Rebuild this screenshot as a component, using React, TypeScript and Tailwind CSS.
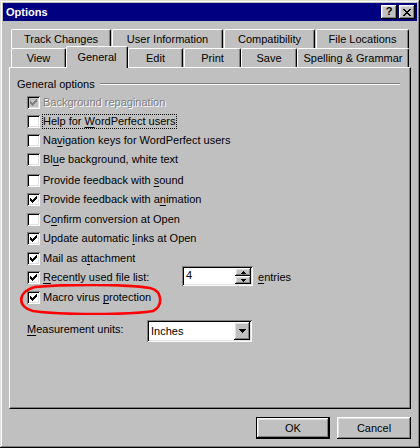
import React from 'react';

const raised = 'shadow-[inset_-1px_-1px_#000,inset_1px_1px_#fff,inset_-2px_-2px_#808080,inset_2px_2px_#dfdfdf]';
const sunken = 'shadow-[inset_1px_1px_#808080,inset_-1px_-1px_#fff,inset_2px_2px_#000,inset_-2px_-2px_#dfdfdf]';

// "&" marks the accelerator letter
const Label = ({ text }: { text: string }) => {
  const i = text.indexOf('&');
  if (i < 0) return <>{text}</>;
  return (
    <>
      {text.slice(0, i)}
      <span className="underline decoration-1 underline-offset-[2px]">{text[i + 1]}</span>
      {text.slice(i + 2)}
    </>
  );
};

const checkCols = [2, 3, 4, 3, 2, 1, 0];

const CheckBox = ({ checked, disabled }: { checked?: boolean; disabled?: boolean }) => (
  <div className={`relative h-[13px] w-[13px] shrink-0 ${disabled ? 'bg-[#c0c0c0]' : 'bg-white'} ${sunken}`}>
    {checked ? (
      <svg className="absolute left-0 top-0" width="13" height="13" viewBox="0 0 13 13" shapeRendering="crispEdges">
        {checkCols.map((start, c) => (
          <rect key={c} x={3 + c} y={3 + start} width="1" height="3" fill={disabled ? '#808080' : '#000'} />
        ))}
      </svg>
    ) : null}
  </div>
);

const Arrow = ({ dir, size }: { dir: 'up' | 'down'; size: number }) => {
  const rows = Array.from({ length: Math.ceil(size / 2) }, (_, r) => r);
  const h = rows.length;
  return (
    <svg width={size} height={h} viewBox={`0 0 ${size} ${h}`} shapeRendering="crispEdges">
      {rows.map((r) => {
        const w = size - r * 2;
        const y = dir === 'down' ? r : h - 1 - r;
        return <rect key={r} x={r} y={y} width={w} height="1" fill="#000" />;
      })}
    </svg>
  );
};

const Tab = ({ label, w, selected }: { label: string; w: string; selected?: boolean }) => (
  <div
    className={`${w} flex shrink-0 justify-center rounded-tl-[2px] rounded-tr-[2px] border-l border-t border-r border-l-white border-t-white border-r-black bg-[#c0c0c0] shadow-[inset_-1px_0_#808080] ${
      selected ? 'relative z-10 -mt-[2px] h-[22px] pt-[4px]' : 'h-[19px] pt-[3px]'
    }`}
  >
    <span className="whitespace-nowrap">{label}</span>
  </div>
);

type Row = { label: string; h: string; checked?: boolean; disabled?: boolean; focus?: boolean; spin?: boolean };

const rows: Row[] = [
  { label: 'Background repagination', h: 'h-[19px]', checked: true, disabled: true },
  { label: 'Help for &WordPerfect users', h: 'h-[19px]', focus: true },
  { label: 'Na&vigation keys for WordPerfect users', h: 'h-[19px]' },
  { label: 'Bl&ue background, white text', h: 'h-[21px]' },
  { label: 'Provide feedback with &sound', h: 'h-[19px]' },
  { label: 'Provide feedback with a&nimation', h: 'h-[20px]', checked: true },
  { label: 'C&onfirm conversion at Open', h: 'h-[19px]' },
  { label: 'Update automatic &links at Open', h: 'h-[20px]', checked: true },
  { label: 'Mail as a&ttachment', h: 'h-[19px]', checked: true },
  { label: '&Recently used file list:', h: 'h-[20px]', checked: true, spin: true },
  { label: 'Macro virus &protection', h: 'h-[19px]', checked: true },
];

const App = () => {
  return (
    <div className="relative h-[448px] w-[420px] select-none overflow-hidden bg-[#c0c0c0] font-['Liberation_Sans',Arial,sans-serif] text-[11px] leading-[13px] text-black shadow-[inset_-1px_-1px_#000,inset_1px_1px_#dfdfdf,inset_-2px_-2px_#808080,inset_2px_2px_#fff]">
      {/* title bar */}
      <div className="mx-[3px] mt-[3px] flex h-[18px] items-center bg-[#000080] pl-[3px] pr-[2px]">
        <span className="font-bold text-white">Options</span>
        <div className="ml-auto flex gap-[2px]">
          <div className={`flex h-[14px] w-[16px] items-center justify-center bg-[#c0c0c0] pb-[1px] text-[11px] font-bold leading-[11px] ${raised}`}>
            ?
          </div>
          <div className={`flex h-[14px] w-[16px] items-center justify-center bg-[#c0c0c0] ${raised}`}>
            <svg width="8" height="7" viewBox="0 0 8 7" shapeRendering="crispEdges" fill="#000">
              <rect x="0" y="0" width="2" height="1" />
              <rect x="6" y="0" width="2" height="1" />
              <rect x="1" y="1" width="2" height="1" />
              <rect x="5" y="1" width="2" height="1" />
              <rect x="2" y="2" width="4" height="1" />
              <rect x="3" y="3" width="2" height="1" />
              <rect x="2" y="4" width="4" height="1" />
              <rect x="1" y="5" width="2" height="1" />
              <rect x="5" y="5" width="2" height="1" />
              <rect x="0" y="6" width="2" height="1" />
              <rect x="6" y="6" width="2" height="1" />
            </svg>
          </div>
        </div>
      </div>

      {/* tabs */}
      <div className="mt-[8px] flex h-[19px] gap-[1px] pl-[11px]">
        <Tab label="Track Changes" w="w-[100px]" />
        <Tab label="User Information" w="w-[111px]" />
        <Tab label="Compatibility" w="w-[91px]" />
        <Tab label="File Locations" w="w-[93px]" />
      </div>
      <div className="flex h-[19px] items-start pl-[11px]">
        <Tab label="View" w="w-[55px]" />
        <Tab label="General" w="w-[62px]" selected />
        <Tab label="Edit" w="w-[55px]" />
        <div className="ml-[1px]">
          <Tab label="Print" w="w-[57px]" />
        </div>
        <Tab label="Save" w="w-[56px]" />
        <Tab label="Spelling & Grammar" w="w-[112px]" />
      </div>

      {/* page */}
      <div className="ml-[9px] h-[342px] w-[402px] border border-l-white border-t-white border-r-black border-b-black shadow-[inset_-1px_-1px_#808080]">
        <div className="mt-[9px] flex h-[14px] items-center pl-[7px] pr-[10px]">
          <span>General options</span>
          <div className="ml-[5px] h-[2px] flex-1 border-t border-b border-t-[#808080] border-b-white" />
        </div>

        <div className="mt-[2px] flex flex-col">
          {rows.map((row) => (
            <div key={row.label} className={`flex items-start pl-[17px] ${row.h}`}>
              <div className="mt-[3px]">
                <CheckBox checked={row.checked} disabled={row.disabled} />
              </div>
              <div className={row.spin ? 'ml-[2px] w-[140px] shrink-0' : 'ml-[2px]'}>
                <span
                  className={`mt-[2px] inline-block h-[15px] whitespace-nowrap border pr-[1px] ${
                    row.focus ? 'border-dotted border-black' : 'border-transparent'
                  } ${row.disabled ? 'text-[#808080] [text-shadow:1px_1px_0_#fff]' : ''}`}
                >
                  <Label text={row.label} />
                </span>
              </div>
              {row.spin ? (
                <>
                  <div className={`-mt-[2px] flex h-[20px] w-[71px] shrink-0 bg-white p-[2px] ${sunken}`}>
                    <span className="flex-1 pl-[2px] pt-[1px]">4</span>
                    <div className="flex w-[16px] flex-col">
                      <div className={`flex h-[8px] items-center justify-center bg-[#c0c0c0] ${raised}`}>
                        <Arrow dir="up" size={5} />
                      </div>
                      <div className={`flex h-[8px] items-center justify-center bg-[#c0c0c0] ${raised}`}>
                        <Arrow dir="down" size={5} />
                      </div>
                    </div>
                  </div>
                  <span className="ml-[4px] mt-[2px] inline-block h-[15px] border border-transparent">
                    <Label text="&entries" />
                  </span>
                </>
              ) : null}
            </div>
          ))}
        </div>

        <div className="mt-[13px] flex h-[22px] items-start pl-[17px]">
          <span className="mt-[3px] w-[120px] shrink-0">
            <Label text="&Measurement units:" />
          </span>
          <div className={`flex h-[22px] w-[105px] bg-white p-[2px] ${sunken}`}>
            <span className="flex-1 pl-[2px] pt-[3px]">Inches</span>
            <div className={`flex h-[18px] w-[16px] items-center justify-center bg-[#c0c0c0] ${raised}`}>
              <Arrow dir="down" size={7} />
            </div>
          </div>
        </div>
      </div>

      {/* dialog buttons */}
      <div className="mt-[8px] flex justify-end gap-[7px] pr-[9px]">
        <button type="button" className={`flex h-[22px] w-[74px] items-center justify-center border border-black bg-[#c0c0c0] ${raised}`}>
          OK
        </button>
        <button type="button" className={`flex h-[22px] w-[74px] items-center justify-center bg-[#c0c0c0] ${raised}`}>
          Cancel
        </button>
      </div>

      {/* red marker circle drawn over the screenshot */}
      <svg className="pointer-events-none absolute left-[15px] top-[284px]" width="149" height="31" viewBox="0 0 149 31">
        <path
          d="M20 3 C50 0 110 0 135 4 C148 7 148 22 138 27 C115 31 45 31 18 27 C3 24 1 8 20 3 Z"
          fill="none"
          stroke="#ff0000"
          strokeWidth="2.6"
        />
      </svg>
    </div>
  );
};

export default App;
